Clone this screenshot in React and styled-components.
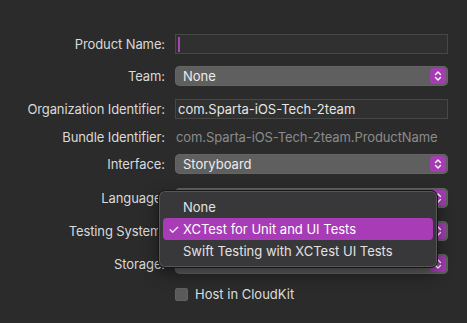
import React from 'react'
import styled, { createGlobalStyle } from 'styled-components'

const GlobalStyle = createGlobalStyle`
html, body {
  margin: 0;
  padding: 0;
  background: #2b2b2b;
}
body {
  font-family: Inter, "Liberation Sans", sans-serif;
  font-size: 13px;
  color: #dedede;
  -webkit-font-smoothing: antialiased;
}
`

const Page = styled.div`
position: relative;
width: 467px;
height: 323px;
overflow: hidden;
padding-top: 34px;
box-sizing: border-box;
`

const Form = styled.div`
display: flex;
flex-direction: column;
`

const Row = styled.div`
display: grid;
grid-template-columns: 165px 273px;
column-gap: 10px;
align-items: center;
height: 20px;
margin-top: ${p => p.$gap || 0}px;
`

const Label = styled.div`
text-align: right;
white-space: nowrap;
color: #dadada;
letter-spacing: -0.1px;
`

const TextField = styled.div`
height: 20px;
box-sizing: border-box;
border: 1px solid #474747;
background: #303030;
display: flex;
align-items: center;
padding-left: 2px;
color: #e6e6e6;
`

const Caret = styled.span`
width: 2px;
height: 15px;
background: #a445b2;
`

const Popup = styled.div`
position: relative;
height: 20px;
box-sizing: border-box;
border-radius: 5px;
background: #5f5f5f;
box-shadow: 0 0 0 0.5px #6b6b6b inset;
display: flex;
align-items: center;
padding-left: 8px;
color: #ececec;
`

const Stepper = styled.span`
position: absolute;
right: 2px;
top: 2px;
width: 16px;
height: 16px;
border-radius: 4px;
background: #a53cb4;
display: flex;
align-items: center;
justify-content: center;
`

const StaticValue = styled.div`
color: #8b8b8b;
padding-left: 1px;
white-space: nowrap;
letter-spacing: -0.1px;
`

const CheckRow = styled.div`
display: flex;
align-items: center;
gap: 7px;
`

const Checkbox = styled.span`
width: 13px;
height: 13px;
border-radius: 3px;
background: #5a5a5a;
box-shadow: 0 0 0 0.5px #6a6a6a inset;
`

const Menu = styled.div`
position: absolute;
left: 158px;
top: 190px;
width: 280px;
box-sizing: border-box;
padding: 5px 4px;
border-radius: 7px;
background: #38383a;
border: 1px solid #161616;
box-shadow: 0 0 0 1px #575757 inset, 0 6px 16px rgba(0, 0, 0, 0.45);
`

const MenuItem = styled.div`
height: 22px;
display: flex;
align-items: center;
padding-left: 20px;
position: relative;
border-radius: 4px;
color: #e2e2e2;
background: ${p => (p.$active ? '#a83cb6' : 'transparent')};
${p => p.$active && 'color: #fff;'}
`

const Check = styled.span`
position: absolute;
left: 5px;
top: 0;
height: 22px;
display: flex;
align-items: center;
font-size: 13px;
`

const Chevrons = () => (
  <svg width="10" height="12" viewBox="0 0 10 12">
    <path d="M2.5 4.5 L5 2 L7.5 4.5 M2.5 7.5 L5 10 L7.5 7.5" fill="none" stroke="#fff" strokeWidth="1.4" strokeLinecap="round" strokeLinejoin="round" />
  </svg>
)

// value is omitted where the open menu covers the popup
const PopupField = ({ value }) => (
  <Popup>
    {value}
    <Stepper><Chevrons /></Stepper>
  </Popup>
)

const menuItems = ['None', 'XCTest for Unit and UI Tests', 'Swift Testing with XCTest UI Tests']

const App = () => {
  return (
    <Page>
      <GlobalStyle />
      <Form>
        <Row>
          <Label>Product Name:</Label>
          <TextField><Caret /></TextField>
        </Row>
        <Row $gap={12}>
          <Label>Team:</Label>
          <PopupField value="None" />
        </Row>
        <Row $gap={13}>
          <Label>Organization Identifier:</Label>
          <TextField>com.Sparta-iOS-Tech-2team</TextField>
        </Row>
        <Row $gap={8}>
          <Label>Bundle Identifier:</Label>
          <StaticValue>com.Sparta-iOS-Tech-2team.ProductName</StaticValue>
        </Row>
        <Row $gap={7}>
          <Label>Interface:</Label>
          <PopupField value="Storyboard" />
        </Row>
        <Row $gap={14}>
          <Label>Language:</Label>
          <PopupField />
        </Row>
        <Row $gap={13}>
          <Label>Testing System:</Label>
          <PopupField />
        </Row>
        <Row $gap={13}>
          <Label>Storage:</Label>
          <PopupField />
        </Row>
        <Row $gap={10}>
          <span />
          <CheckRow>
            <Checkbox />
            Host in CloudKit
          </CheckRow>
        </Row>
      </Form>

      <Menu>
        {menuItems.map((item, i) => (
          <MenuItem key={item} $active={i === 1}>
            {i === 1 && <Check>✓</Check>}
            {item}
          </MenuItem>
        ))}
      </Menu>
    </Page>
  )
}

export default App
